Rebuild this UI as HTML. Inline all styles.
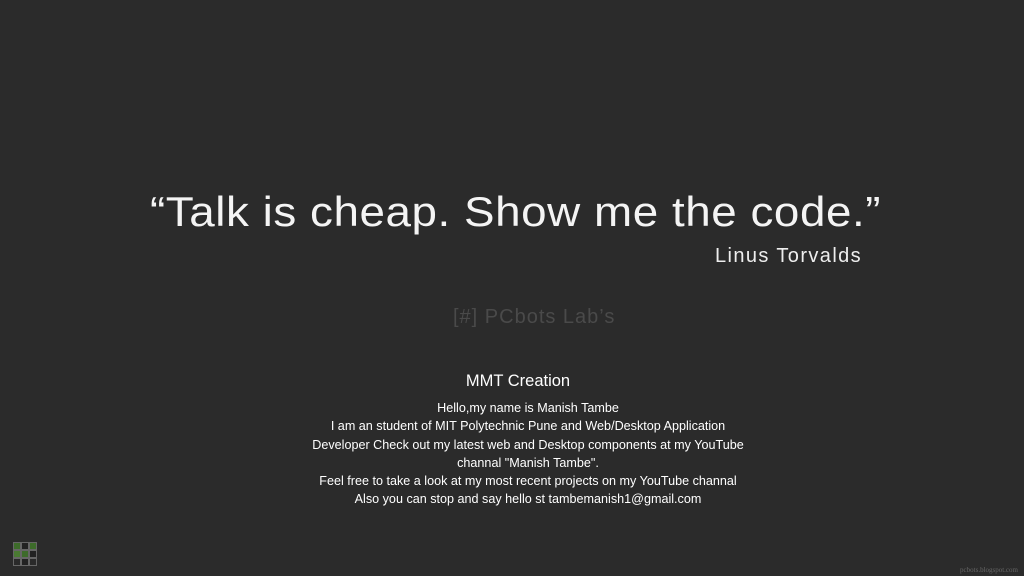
<!DOCTYPE html>
<html><head><style>
body{margin:0;width:1024px;height:576px;background:#2b2b2b;overflow:hidden;position:relative;font-family:"Liberation Sans",sans-serif;color:#fff}
.q{position:absolute;left:150px;top:188px;font-size:42px;white-space:nowrap;letter-spacing:0.5px;color:#f4f4f4;transform:scaleX(1.09);transform-origin:0 0}
.a{position:absolute;left:715px;top:245px;font-size:20px;letter-spacing:1.4px;color:#eee}
.l{position:absolute;left:453px;top:306px;font-size:20px;color:#4a4a4a;letter-spacing:1px}
.t{position:absolute;left:0;width:1036px;text-align:center;top:372px;font-size:16.5px;color:#fff}
.b{position:absolute;left:0;width:1056px;text-align:center;top:399px;font-size:12.6px;line-height:18.3px;color:#fff}
.g{position:absolute;left:13px;top:542px;width:24px;height:24px;display:grid;grid-template-columns:repeat(3,8px);grid-template-rows:repeat(3,8px)}
.g div{border:1px solid #666;box-sizing:border-box}
.s{position:absolute;right:6px;bottom:2px;font-size:7px;color:#666;font-family:"Liberation Serif",serif}
</style></head><body>
<div class="q">“Talk is cheap. Show me the code.”</div>
<div class="a">Linus Torvalds</div>
<div class="l">[#] PCbots Lab’s</div>
<div class="t">MMT Creation</div>
<div class="b">Hello,my name is Manish Tambe<br>I am an student of MIT Polytechnic Pune and Web/Desktop Application<br>Developer Check out my latest web and Desktop components at my YouTube<br>channal "Manish Tambe".<br>Feel free to take a look at my most recent projects on my YouTube channal<br>Also you can stop and say hello st tambemanish1@gmail.com</div>
<div class="g"><div style="background:#3d6b2a"></div><div style="background:#222"></div><div style="background:#3d6b2a"></div><div style="background:#4a7a32"></div><div style="background:#3d6b2a"></div><div style="background:#222"></div><div style="background:#2a2a2a"></div><div style="background:#222"></div><div style="background:#2a2a2a"></div></div>
<div class="s">pcbots.blogspot.com</div>
</body></html>
